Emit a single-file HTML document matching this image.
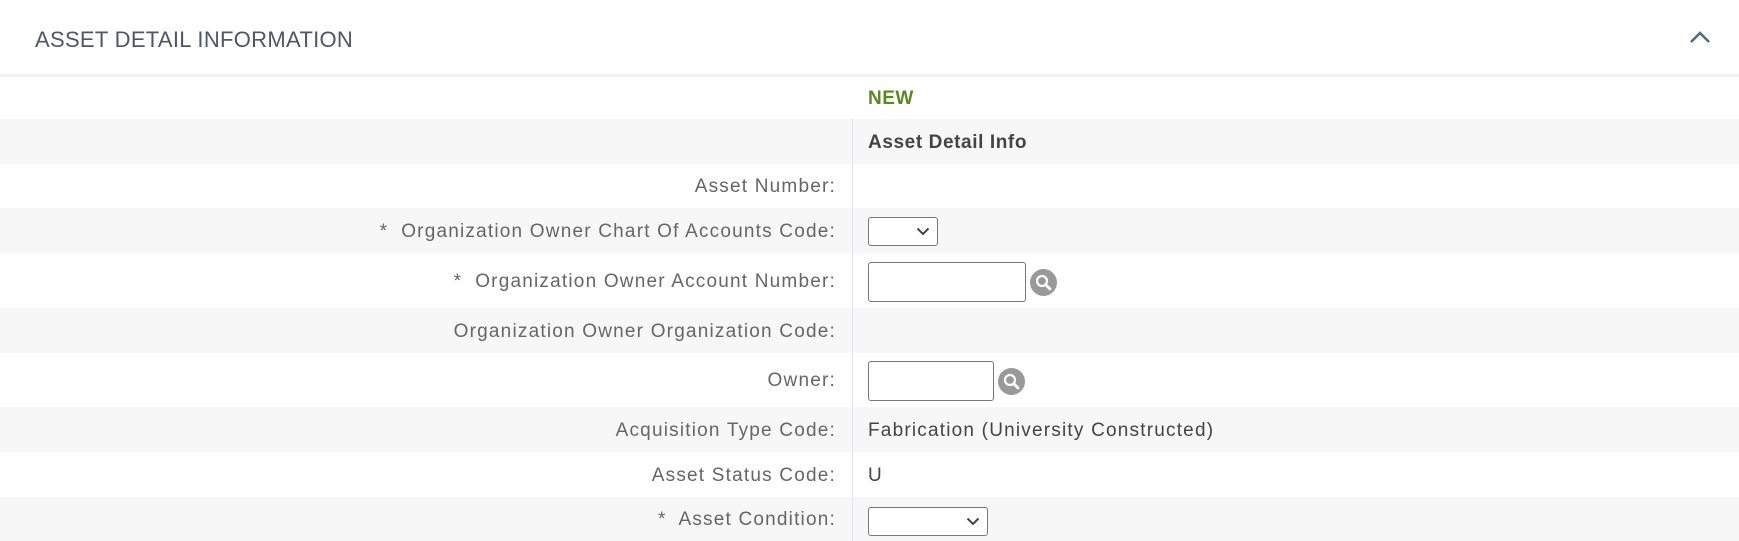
<!DOCTYPE html>
<html><head><meta charset="utf-8"><style>
*{margin:0;padding:0;box-sizing:border-box}
body{width:1739px;height:541px;background:#fff;font-family:"Liberation Sans",Arial,sans-serif;position:relative;overflow:hidden}
.title{position:absolute;left:35px;top:27px;font-size:22px;color:#4d5864;letter-spacing:.3px}
.chev{position:absolute;left:1689px;top:30px}
.hr{position:absolute;left:0;top:74px;width:1739px;height:3px;background:#f2f2f2}
.row{position:absolute;left:0;width:1739px;display:flex;align-items:center;padding-top:2px}
.g{background:#f7f7f7}
.lab{position:absolute;right:903px;font-size:19px;color:#666;letter-spacing:1.2px;white-space:nowrap}
.val{position:absolute;left:868px;font-size:19px;color:#444;letter-spacing:1.2px;white-space:nowrap}
.div{position:absolute;left:852px;top:119px;width:1px;height:422px;background:#dde8ea}
.box{position:absolute;border:1px solid #777;border-radius:3px;background:#fff}
.srch{position:absolute;width:27px;height:27px;border-radius:50%;background:#999}
</style></head><body>
<div class="title">ASSET DETAIL INFORMATION</div>
<svg class="chev" width="22" height="15" viewBox="0 0 22 15"><path d="M2 12 L11 3 L20 12" fill="none" stroke="#4d6a80" stroke-width="2.5"/></svg>
<div class="hr"></div>

<div class="row" style="top:77px;height:42px"><span class="val" style="color:#5a8a1f;font-weight:bold;letter-spacing:.5px">NEW</span></div>
<div class="row g" style="top:119px;height:45px"><span class="val" style="font-weight:bold;letter-spacing:.6px">Asset Detail Info</span></div>
<div class="row" style="top:164px;height:44px"><span class="lab">Asset Number:</span></div>
<div class="row g" style="top:208px;height:46px"><span class="lab">*&nbsp; Organization Owner Chart Of Accounts Code:</span></div>
<div class="row" style="top:254px;height:54px"><span class="lab">*&nbsp; Organization Owner Account Number:</span></div>
<div class="row g" style="top:308px;height:45px"><span class="lab">Organization Owner Organization Code:</span></div>
<div class="row" style="top:353px;height:54px"><span class="lab">Owner:</span></div>
<div class="row g" style="top:407px;height:45px"><span class="lab">Acquisition Type Code:</span><span class="val">Fabrication (University Constructed)</span></div>
<div class="row" style="top:452px;height:45px"><span class="lab">Asset Status Code:</span><span class="val">U</span></div>
<div class="row g" style="top:497px;height:44px"><span class="lab">*&nbsp; Asset Condition:</span></div>
<div class="div"></div>

<div class="box" style="left:868px;top:217px;width:70px;height:29px"><svg style="position:absolute;right:7px;top:9px" width="14" height="9" viewBox="0 0 14 9"><path d="M1.5 1.5 L7 7 L12.5 1.5" fill="none" stroke="#444" stroke-width="2"/></svg></div>
<div class="box" style="left:868px;top:262px;width:158px;height:40px"></div>
<div class="srch" style="left:1030px;top:269px"><svg width="27" height="27" viewBox="0 0 27 27"><circle cx="12" cy="12" r="5" fill="none" stroke="#fff" stroke-width="2.2"/><path d="M15.5 15.5 L20 20" stroke="#fff" stroke-width="2.8" stroke-linecap="round"/></svg></div>
<div class="box" style="left:868px;top:361px;width:126px;height:40px"></div>
<div class="srch" style="left:998px;top:368px"><svg width="27" height="27" viewBox="0 0 27 27"><circle cx="12" cy="12" r="5" fill="none" stroke="#fff" stroke-width="2.2"/><path d="M15.5 15.5 L20 20" stroke="#fff" stroke-width="2.8" stroke-linecap="round"/></svg></div>
<div class="box" style="left:868px;top:507px;width:120px;height:29px"><svg style="position:absolute;right:7px;top:9px" width="14" height="9" viewBox="0 0 14 9"><path d="M1.5 1.5 L7 7 L12.5 1.5" fill="none" stroke="#444" stroke-width="2"/></svg></div>
</body></html>
